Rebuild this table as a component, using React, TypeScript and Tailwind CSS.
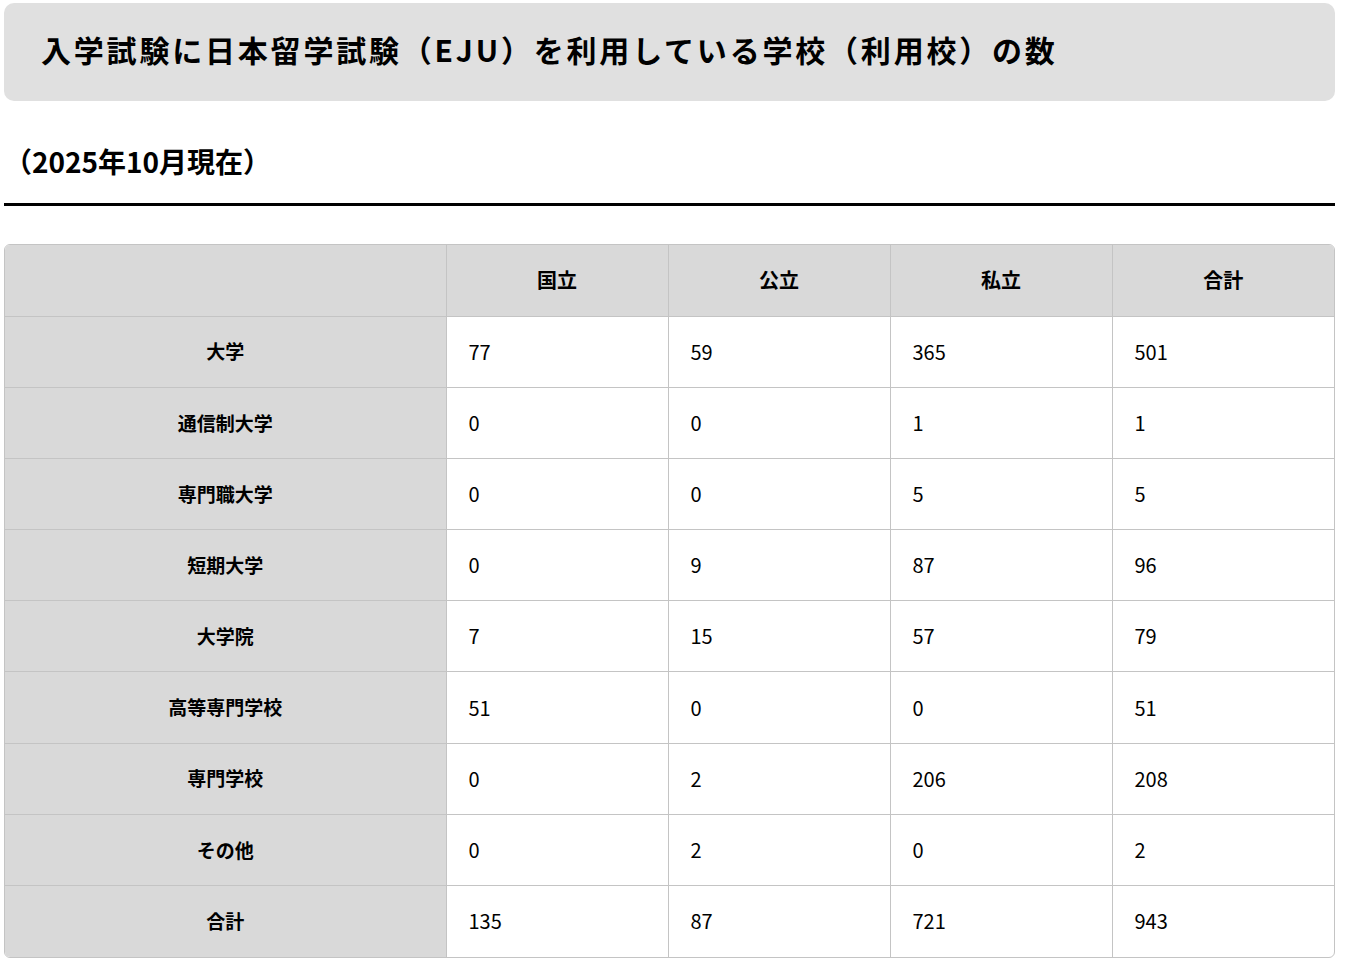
const rows: [string, string, string, string, string][] = [
  ["大学", "77", "59", "365", "501"],
  ["通信制大学", "0", "0", "1", "1"],
  ["専門職大学", "0", "0", "5", "5"],
  ["短期大学", "0", "9", "87", "96"],
  ["大学院", "7", "15", "57", "79"],
  ["高等専門学校", "51", "0", "0", "51"],
  ["専門学校", "0", "2", "206", "208"],
  ["その他", "0", "2", "0", "2"],
  ["合計", "135", "87", "721", "943"],
];

export default function App() {
  return (
    <div
      className="min-h-screen bg-white pl-[4px] pr-[10px] pt-[3px] text-black"
      style={{ fontFamily: '"Noto Sans CJK JP", "Noto Sans", sans-serif' }}
    >
      {/* タイトル */}
      <div className="flex h-[98px] items-center rounded-[10px] bg-[#e0e0e0] pb-[6px] pl-[37px]">
        <h1 className="text-[30px] font-bold leading-none tracking-[2.8px]">
          入学試験に日本留学試験（EJU）を利用している学校（利用校）の数
        </h1>
      </div>

      {/* 日付 */}
      <div className="border-b-[3px] border-black pb-[24px] pt-[42px]">
        <p className="text-[28px] font-bold leading-[36px]">（2025年10月現在）</p>
      </div>

      {/* 表 */}
      <div className="mt-[38px] overflow-hidden rounded-[6px] border border-[#c4c4c4]">
        <table className="w-full table-fixed border-collapse">
          <colgroup>
            <col className="w-[441px]" />
            <col />
            <col />
            <col />
            <col />
          </colgroup>
          <thead>
            <tr className="h-[71px] bg-[#d9d9d9]">
              <th className="border-r border-[#c4c4c4]" />
              {["国立", "公立", "私立", "合計"].map((h, i) => (
                <th
                  key={h}
                  className={`text-center text-[20px] font-bold ${i < 3 ? "border-r border-[#c4c4c4]" : ""}`}
                >
                  {h}
                </th>
              ))}
            </tr>
          </thead>
          <tbody>
            {rows.map((r) => (
              <tr key={r[0]} className="h-[71.2px] border-t border-[#c4c4c4]">
                <th className="border-r border-[#c4c4c4] bg-[#d9d9d9] text-center text-[19px] font-bold">
                  {r[0]}
                </th>
                {r.slice(1).map((v, i) => (
                  <td
                    key={i}
                    className={`pl-[22px] text-left text-[20px] ${i < 3 ? "border-r border-[#c4c4c4]" : ""}`}
                  >
                    {v}
                  </td>
                ))}
              </tr>
            ))}
          </tbody>
        </table>
      </div>
    </div>
  );
}
